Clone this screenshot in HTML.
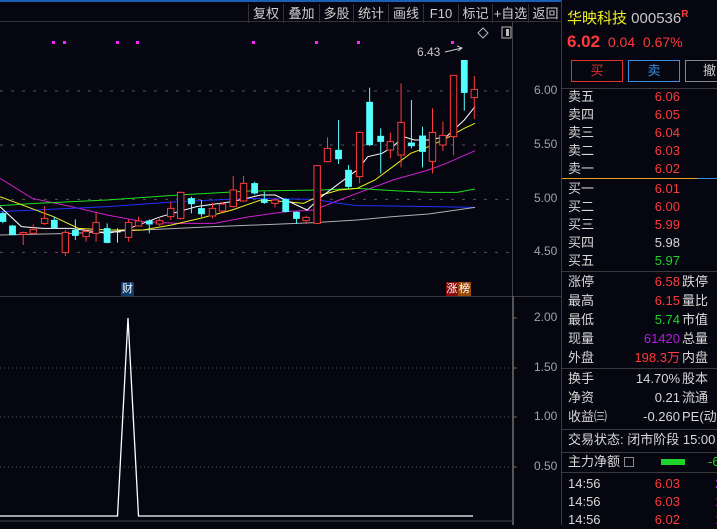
<!DOCTYPE html>
<html><head><meta charset="utf-8"><style>
*{margin:0;padding:0;box-sizing:border-box}
body{width:717px;height:525px;background:#05060f;overflow:hidden;position:relative;font-family:"Liberation Sans","Noto Sans CJK SC",sans-serif;color:#c8c8c8;font-size:13px}
.abs{position:absolute}
#top{left:0;top:0;width:562px;height:22px;border-top:2px solid #1a5fb4;border-bottom:1px solid #333}
.btn{position:absolute;top:2px;height:19px;line-height:19px;text-align:center;color:#d0d0d0;font-size:13px;border-left:1px solid #333}
#rp{left:561px;top:0;width:156px;height:525px;border-left:1px solid #3a3a3a}
.row{position:absolute;left:6px;width:150px;height:18px;line-height:18px;font-size:13px}
.row .l{position:absolute;left:0;color:#d8d8d8}
.row .v{position:absolute;right:38px}
.row .r{position:absolute;left:114px;color:#d8d8d8;white-space:nowrap}
.hl{position:absolute;left:0;width:156px;height:1px;background:#3a3a3a}
.red{color:#ff3a3a}.grn{color:#1ed32a}.wht{color:#d8d8d8}.pur{color:#b31ee0}
.ax{position:absolute;font-size:12px;color:#9aa3b0}
</style></head><body>
<div id="top" class="abs">
<div class="btn" style="left:248px;width:35px">复权</div>
<div class="btn" style="left:283px;width:36px">叠加</div>
<div class="btn" style="left:319px;width:34px">多股</div>
<div class="btn" style="left:353px;width:35px">统计</div>
<div class="btn" style="left:388px;width:35px">画线</div>
<div class="btn" style="left:423px;width:35px">F10</div>
<div class="btn" style="left:458px;width:34px">标记</div>
<div class="btn" style="left:492px;width:36px">+自选</div>
<div class="btn" style="left:528px;width:34px">返回</div>
</div>
<div class="abs" style="left:512px;top:22px;width:1px;height:274px;background:#444"></div>

<svg class="abs" style="left:0;top:22px" width="562" height="38">
<g fill="#ff20ff"><rect x="52" y="19" width="3" height="3"/><rect x="63" y="19" width="3" height="3"/><rect x="116" y="19" width="3" height="3"/><rect x="136" y="19" width="3" height="3"/><rect x="252" y="19" width="3" height="3"/><rect x="315" y="19" width="3" height="3"/><rect x="357" y="19" width="3" height="3"/><rect x="451" y="19" width="3" height="3"/></g>
<path d="M483 6 L488 11 L483 16 L478 11 Z" fill="none" stroke="#bbb"/>
<rect x="502" y="5" width="9" height="11" fill="none" stroke="#bbb"/><rect x="506" y="7" width="3" height="7" fill="#bbb"/>
<text x="417" y="34" fill="#c8c8c8" font-size="12" font-family="Liberation Sans">6.43</text>
<path d="M445 30 L462 26 M457 24 L462 26 L458 29" stroke="#ccc" fill="none"/>
</svg>

<svg class="abs" style="left:0;top:60px" width="560" height="240" viewBox="0 0 1568 720" preserveAspectRatio="none">
<g stroke="#555" stroke-dasharray="3 8" vector-effect="non-scaling-stroke"><line x1="0" y1="93" x2="1430" y2="93" vector-effect="non-scaling-stroke"/><line x1="0" y1="255" x2="1430" y2="255" vector-effect="non-scaling-stroke"/><line x1="0" y1="418" x2="1430" y2="418" vector-effect="non-scaling-stroke"/><line x1="0" y1="577" x2="1430" y2="577" vector-effect="non-scaling-stroke"/></g>
<g fill="none" vector-effect="non-scaling-stroke">
<polyline vector-effect="non-scaling-stroke" stroke="#d020d0" points="0,355 90,415 200,440 300,465 400,485 500,490 600,490 700,470 800,455 880,450 950,420 1000,400 1050,380 1100,360 1200,330 1250,310 1330,272"/>
<polyline vector-effect="non-scaling-stroke" stroke="#20e020" points="0,437 100,430 300,420 500,405 700,393 900,390 1000,385 1100,392 1200,397 1280,397 1330,387"/>
<polyline vector-effect="non-scaling-stroke" stroke="#2030ff" points="0,455 100,450 300,440 500,425 700,415 880,418 950,430 1000,437 1100,438 1330,442"/>
<polyline vector-effect="non-scaling-stroke" stroke="#b0b0b0" points="0,525 200,520 400,510 600,500 880,488 1000,480 1100,470 1200,462 1330,442"/>
<polyline vector-effect="non-scaling-stroke" stroke="#f0f020" points="0,410 50,430 150,470 220,505 300,510 400,510 480,495 560,475 650,450 730,420 800,425 850,430 900,405 950,390 1000,385 1050,360 1100,320 1150,280 1200,260 1250,235 1300,205 1330,190"/>
<polyline vector-effect="non-scaling-stroke" stroke="#ffffff" points="0,440 60,500 120,505 200,505 300,520 350,510 450,470 550,440 650,425 730,405 770,405 800,420 860,450 900,410 950,370 1000,330 1030,290 1070,280 1100,260 1130,230 1160,240 1200,240 1250,230 1300,180 1330,140"/>
</g>
<g stroke="#54ffff" fill="#54ffff">
<line x1="8" y1="455" x2="8" y2="490" vector-effect="non-scaling-stroke"/><rect x="-1" y="460" width="18" height="25"/>
<line x1="35" y1="495" x2="35" y2="525" vector-effect="non-scaling-stroke"/><rect x="26" y="497" width="18" height="28"/>
<line x1="152" y1="470" x2="152" y2="505" vector-effect="non-scaling-stroke"/><rect x="143" y="480" width="18" height="23"/>
<line x1="211" y1="478" x2="211" y2="540" vector-effect="non-scaling-stroke"/><rect x="202" y="510" width="18" height="17"/>
<line x1="300" y1="490" x2="300" y2="550" vector-effect="non-scaling-stroke"/><rect x="291" y="505" width="18" height="43"/>
<line x1="418" y1="478" x2="418" y2="520" vector-effect="non-scaling-stroke"/><rect x="409" y="482" width="18" height="11"/>
<line x1="536" y1="410" x2="536" y2="460" vector-effect="non-scaling-stroke"/><rect x="527" y="415" width="18" height="17"/>
<line x1="564" y1="420" x2="564" y2="470" vector-effect="non-scaling-stroke"/><rect x="555" y="445" width="18" height="17"/>
<line x1="713" y1="365" x2="713" y2="404" vector-effect="non-scaling-stroke"/><rect x="704" y="370" width="18" height="30"/>
<line x1="740" y1="395" x2="740" y2="432" vector-effect="non-scaling-stroke"/><rect x="731" y="418" width="18" height="10"/>
<line x1="800" y1="415" x2="800" y2="458" vector-effect="non-scaling-stroke"/><rect x="791" y="418" width="18" height="37"/>
<line x1="830" y1="455" x2="830" y2="492" vector-effect="non-scaling-stroke"/><rect x="821" y="456" width="18" height="20"/>
<line x1="948" y1="180" x2="948" y2="312" vector-effect="non-scaling-stroke"/><rect x="939" y="270" width="18" height="27"/>
<line x1="976" y1="315" x2="976" y2="385" vector-effect="non-scaling-stroke"/><rect x="967" y="330" width="18" height="50"/>
<line x1="1035" y1="83" x2="1035" y2="258" vector-effect="non-scaling-stroke"/><rect x="1026" y="126" width="18" height="129"/>
<line x1="1066" y1="205" x2="1066" y2="340" vector-effect="non-scaling-stroke"/><rect x="1057" y="228" width="18" height="17"/>
<line x1="1152" y1="120" x2="1152" y2="265" vector-effect="non-scaling-stroke"/><rect x="1143" y="248" width="18" height="10"/>
<line x1="1183" y1="200" x2="1183" y2="322" vector-effect="non-scaling-stroke"/><rect x="1174" y="227" width="18" height="48"/>
<line x1="1300" y1="-50" x2="1300" y2="152" vector-effect="non-scaling-stroke"/><rect x="1291" y="-40" width="18" height="138"/>
</g>
<g stroke="#ddd"><line x1="329" y1="505" x2="329" y2="548" vector-effect="non-scaling-stroke"/><line x1="320" y1="516" x2="338" y2="516" vector-effect="non-scaling-stroke"/></g>
<g stroke="#ff3b3b" fill="#05060f">
<line x1="65" y1="515" x2="65" y2="555" vector-effect="non-scaling-stroke"/><rect x="56" y="518" width="18" height="5" vector-effect="non-scaling-stroke"/>
<line x1="93" y1="493" x2="93" y2="520" vector-effect="non-scaling-stroke"/><rect x="84" y="508" width="18" height="12" vector-effect="non-scaling-stroke"/>
<line x1="125" y1="438" x2="125" y2="495" vector-effect="non-scaling-stroke"/><rect x="116" y="475" width="18" height="15" vector-effect="non-scaling-stroke"/>
<line x1="183" y1="510" x2="183" y2="588" vector-effect="non-scaling-stroke"/><rect x="174" y="517" width="18" height="61" vector-effect="non-scaling-stroke"/>
<line x1="241" y1="505" x2="241" y2="545" vector-effect="non-scaling-stroke"/><rect x="232" y="515" width="18" height="15" vector-effect="non-scaling-stroke"/>
<line x1="269" y1="458" x2="269" y2="545" vector-effect="non-scaling-stroke"/><rect x="260" y="487" width="18" height="33" vector-effect="non-scaling-stroke"/>
<line x1="360" y1="478" x2="360" y2="545" vector-effect="non-scaling-stroke"/><rect x="351" y="487" width="18" height="45" vector-effect="non-scaling-stroke"/>
<line x1="388" y1="470" x2="388" y2="500" vector-effect="non-scaling-stroke"/><rect x="379" y="483" width="18" height="15" vector-effect="non-scaling-stroke"/>
<line x1="447" y1="470" x2="447" y2="498" vector-effect="non-scaling-stroke"/><rect x="438" y="482" width="18" height="10" vector-effect="non-scaling-stroke"/>
<line x1="478" y1="425" x2="478" y2="480" vector-effect="non-scaling-stroke"/><rect x="469" y="445" width="18" height="25" vector-effect="non-scaling-stroke"/>
<line x1="506" y1="395" x2="506" y2="478" vector-effect="non-scaling-stroke"/><rect x="497" y="397" width="18" height="78" vector-effect="non-scaling-stroke"/>
<line x1="595" y1="428" x2="595" y2="475" vector-effect="non-scaling-stroke"/><rect x="586" y="445" width="18" height="23" vector-effect="non-scaling-stroke"/>
<line x1="623" y1="428" x2="623" y2="458" vector-effect="non-scaling-stroke"/><rect x="614" y="432" width="18" height="21" vector-effect="non-scaling-stroke"/>
<line x1="653" y1="348" x2="653" y2="442" vector-effect="non-scaling-stroke"/><rect x="644" y="390" width="18" height="50" vector-effect="non-scaling-stroke"/>
<line x1="682" y1="348" x2="682" y2="425" vector-effect="non-scaling-stroke"/><rect x="673" y="370" width="18" height="53" vector-effect="non-scaling-stroke"/>
<line x1="770" y1="415" x2="770" y2="442" vector-effect="non-scaling-stroke"/><rect x="761" y="420" width="18" height="10" vector-effect="non-scaling-stroke"/>
<line x1="857" y1="467" x2="857" y2="492" vector-effect="non-scaling-stroke"/><rect x="848" y="472" width="18" height="10" vector-effect="non-scaling-stroke"/>
<rect x="879" y="317" width="18" height="173" vector-effect="non-scaling-stroke"/>
<line x1="917" y1="232" x2="917" y2="305" vector-effect="non-scaling-stroke"/><rect x="908" y="265" width="18" height="40" vector-effect="non-scaling-stroke"/>
<line x1="1007" y1="215" x2="1007" y2="370" vector-effect="non-scaling-stroke"/><rect x="998" y="217" width="18" height="133" vector-effect="non-scaling-stroke"/>
<line x1="1093" y1="218" x2="1093" y2="295" vector-effect="non-scaling-stroke"/><rect x="1084" y="245" width="18" height="25" vector-effect="non-scaling-stroke"/>
<line x1="1123" y1="70" x2="1123" y2="322" vector-effect="non-scaling-stroke"/><rect x="1114" y="187" width="18" height="98" vector-effect="non-scaling-stroke"/>
<line x1="1211" y1="145" x2="1211" y2="340" vector-effect="non-scaling-stroke"/><rect x="1202" y="217" width="18" height="87" vector-effect="non-scaling-stroke"/>
<line x1="1240" y1="185" x2="1240" y2="272" vector-effect="non-scaling-stroke"/><rect x="1231" y="226" width="18" height="29" vector-effect="non-scaling-stroke"/>
<line x1="1270" y1="46" x2="1270" y2="286" vector-effect="non-scaling-stroke"/><rect x="1261" y="46" width="18" height="184" vector-effect="non-scaling-stroke"/>
<line x1="1328" y1="48" x2="1328" y2="177" vector-effect="non-scaling-stroke"/><rect x="1319" y="88" width="18" height="25" vector-effect="non-scaling-stroke"/>
</g>
</svg>
<div class="ax" style="left:534px;top:83px">6.00</div>
<div class="ax" style="left:534px;top:137px">5.50</div>
<div class="ax" style="left:534px;top:191px">5.00</div>
<div class="ax" style="left:534px;top:244px">4.50</div>
<div class="abs" style="left:121px;top:282px;width:13px;height:14px;background:#0d3b6e;color:#fff;font-size:11px;line-height:14px;text-align:center">财</div>
<div class="abs" style="left:446px;top:282px;width:12px;height:14px;background:#8a0c0c;color:#fff;font-size:11px;line-height:14px;text-align:center">涨</div>
<div class="abs" style="left:458px;top:282px;width:13px;height:14px;background:#9a4a08;color:#fff;font-size:11px;line-height:14px;text-align:center">榜</div>
<div class="abs" style="left:0;top:296px;width:562px;height:1px;background:#3a3a3a"></div>
<svg class="abs" style="left:0;top:296px" width="562" height="229">
<g stroke="#555" stroke-dasharray="1 3"><line x1="0" y1="72" x2="510" y2="72"/><line x1="0" y1="121" x2="510" y2="121"/><line x1="0" y1="171" x2="510" y2="171"/></g>
<line x1="513" y1="0" x2="513" y2="229" stroke="#555" stroke-width="2"/>
<g stroke="#666"><line x1="513" y1="22" x2="517" y2="22"/><line x1="513" y1="72" x2="517" y2="72"/><line x1="513" y1="121" x2="517" y2="121"/><line x1="513" y1="171" x2="517" y2="171"/></g>
<polyline points="0,220 117.5,220 128,22 138.5,220 473,220" fill="none" stroke="#fff" stroke-width="1.3"/>
<line x1="0" y1="225" x2="513" y2="225" stroke="#444"/>
</svg>
<div class="ax" style="left:534px;top:310px">2.00</div>
<div class="ax" style="left:534px;top:360px">1.50</div>
<div class="ax" style="left:534px;top:409px">1.00</div>
<div class="ax" style="left:534px;top:459px">0.50</div>

<div id="rp" class="abs">
<div class="abs" style="left:5px;top:7px;font-size:15px;color:#f0f020;white-space:nowrap">华映科技 <span style="color:#c8c8c8">000536</span><sup style="color:#ff3a3a;font-size:10px;font-weight:bold">R</sup></div>
<div class="abs" style="left:5px;top:32px;white-space:nowrap;color:#ff3a3a;font-size:14px"><b style="font-size:17px">6.02</b>&nbsp; 0.04&nbsp; 0.67%</div>
<div class="abs" style="left:9px;top:60px;width:52px;height:22px;border:1px solid #e03030;color:#e03030;text-align:center;line-height:20px">买</div>
<div class="abs" style="left:66px;top:60px;width:52px;height:22px;border:1px solid #3a8ee0;color:#3a8ee0;text-align:center;line-height:20px">卖</div>
<div class="abs" style="left:123px;top:60px;width:40px;height:22px;border:1px solid #888;color:#ccc;line-height:20px;padding-left:17px">撤</div>
<div class="hl" style="top:88px"></div>
<div class="row" style="top:88px"><span class="l">卖五</span><span class="v red">6.06</span></div>
<div class="row" style="top:106px"><span class="l">卖四</span><span class="v red">6.05</span></div>
<div class="row" style="top:124px"><span class="l">卖三</span><span class="v red">6.04</span></div>
<div class="row" style="top:142px"><span class="l">卖二</span><span class="v red">6.03</span></div>
<div class="row" style="top:160px"><span class="l">卖一</span><span class="v red">6.02</span></div>
<div class="abs" style="left:0;top:178px;width:136px;height:1px;background:#e8a020"></div>
<div class="abs" style="left:136px;top:178px;width:20px;height:1px;background:#3a8ee0"></div>
<div class="row" style="top:180px"><span class="l">买一</span><span class="v red">6.01</span></div>
<div class="row" style="top:198px"><span class="l">买二</span><span class="v red">6.00</span></div>
<div class="row" style="top:216px"><span class="l">买三</span><span class="v red">5.99</span></div>
<div class="row" style="top:234px"><span class="l">买四</span><span class="v wht">5.98</span></div>
<div class="row" style="top:252px"><span class="l">买五</span><span class="v grn">5.97</span></div>
<div class="hl" style="top:271px"></div>
<div class="row" style="top:273px"><span class="l">涨停</span><span class="v red">6.58</span><span class="r">跌停</span></div>
<div class="row" style="top:292px"><span class="l">最高</span><span class="v red">6.15</span><span class="r">量比</span></div>
<div class="row" style="top:311px"><span class="l">最低</span><span class="v grn">5.74</span><span class="r">市值</span></div>
<div class="row" style="top:330px"><span class="l">现量</span><span class="v pur">61420</span><span class="r">总量</span></div>
<div class="row" style="top:349px"><span class="l">外盘</span><span class="v red">198.3万</span><span class="r">内盘</span></div>
<div class="hl" style="top:368px"></div>
<div class="row" style="top:370px"><span class="l">换手</span><span class="v wht">14.70%</span><span class="r">股本</span></div>
<div class="row" style="top:389px"><span class="l">净资</span><span class="v wht">0.21</span><span class="r">流通</span></div>
<div class="row" style="top:408px"><span class="l">收益㈢</span><span class="v wht">-0.260</span><span class="r">PE(动</span></div>
<div class="hl" style="top:429px"></div>
<div class="row" style="top:431px;width:155px;overflow:hidden;white-space:nowrap"><span class="l">交易状态: 闭市阶段 15:00</span></div>
<div class="hl" style="top:452px"></div>
<div class="row" style="top:453px;overflow:hidden"><span class="l">主力净额 <span style="display:inline-block;width:10px;height:10px;border:1px solid #888;vertical-align:-1px"></span></span><span style="position:absolute;left:93px;top:6px;width:24px;height:6px;background:#1ed32a"></span><span class="grn" style="position:absolute;left:140px">-6</span></div>
<div class="hl" style="top:472px"></div>
<div class="row" style="top:475px;overflow:hidden"><span class="l">14:56</span><span class="v red">6.03</span><span class="pur" style="position:absolute;left:147px">2</span></div>
<div class="row" style="top:493px;overflow:hidden"><span class="l">14:56</span><span class="v red">6.03</span><span class="pur" style="position:absolute;left:147px">1</span></div>
<div class="row" style="top:511px;overflow:hidden"><span class="l">14:56</span><span class="v red">6.02</span><span class="pur" style="position:absolute;left:147px">1</span></div>
</div>
</body></html>
